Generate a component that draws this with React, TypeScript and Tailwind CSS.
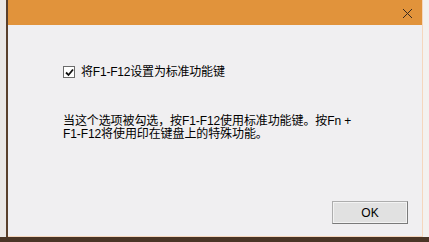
export default function App() {
  return (
    <div className="flex h-[242px] w-[429px] flex-col bg-[#4a3526] font-['Liberation_Sans','Noto_Sans_CJK_SC',sans-serif] text-[12px] text-black">
      <div className="flex flex-1">
        <div className="w-[6px] bg-[#ebe7e4]" />
        <div className="w-[2px] bg-[#5a3f2a]" />
        <div className="flex flex-1 flex-col border-r border-b border-[#f5d6bd] bg-[#f0eff1]">
          <div className="flex h-[25px] items-center justify-end bg-[#e1933b] pr-[9px]">
            <svg width="11" height="11" viewBox="0 0 11 11" className="mt-[1px]">
              <path d="M1 1 L10 10 M10 1 L1 10" stroke="#3a2a1e" strokeWidth="1" />
            </svg>
          </div>
          <div className="flex flex-1 flex-col pl-[55px] pr-[14px]">
            <label className="mt-[38px] flex items-center gap-[6px] tracking-[-0.2px]">
              <span className="flex h-[12px] w-[12px] items-center justify-center border border-[#6b6b6b] bg-white">
                <svg width="9" height="9" viewBox="0 0 9 9">
                  <path d="M1 4.5 L3.5 7 L8 1.5" stroke="#111" strokeWidth="1.8" fill="none" />
                </svg>
              </span>
              <span>将F1-F12设置为标准功能键</span>
            </label>
            <p className="mt-[34px] leading-[13px] tracking-[-0.1px]">
              当这个选项被勾选，按F1-F12使用标准功能键。按Fn +
              <br />
              F1-F12将使用印在键盘上的特殊功能。
            </p>
            <div className="mt-auto mb-[12px] flex justify-end">
              <button className="h-[23px] w-[76px] border border-[#adadad] border-r-[#7a7a7a] border-b-[#7a7a7a] bg-[#e1e1e1] text-[12px] shadow-[inset_0_0_0_1px_#f3f3f3]">
                OK
              </button>
            </div>
          </div>
        </div>
        <div className="w-[6px] bg-[#f3f1ef]" />
      </div>
      <div className="h-[5px]" />
    </div>
  );
}
